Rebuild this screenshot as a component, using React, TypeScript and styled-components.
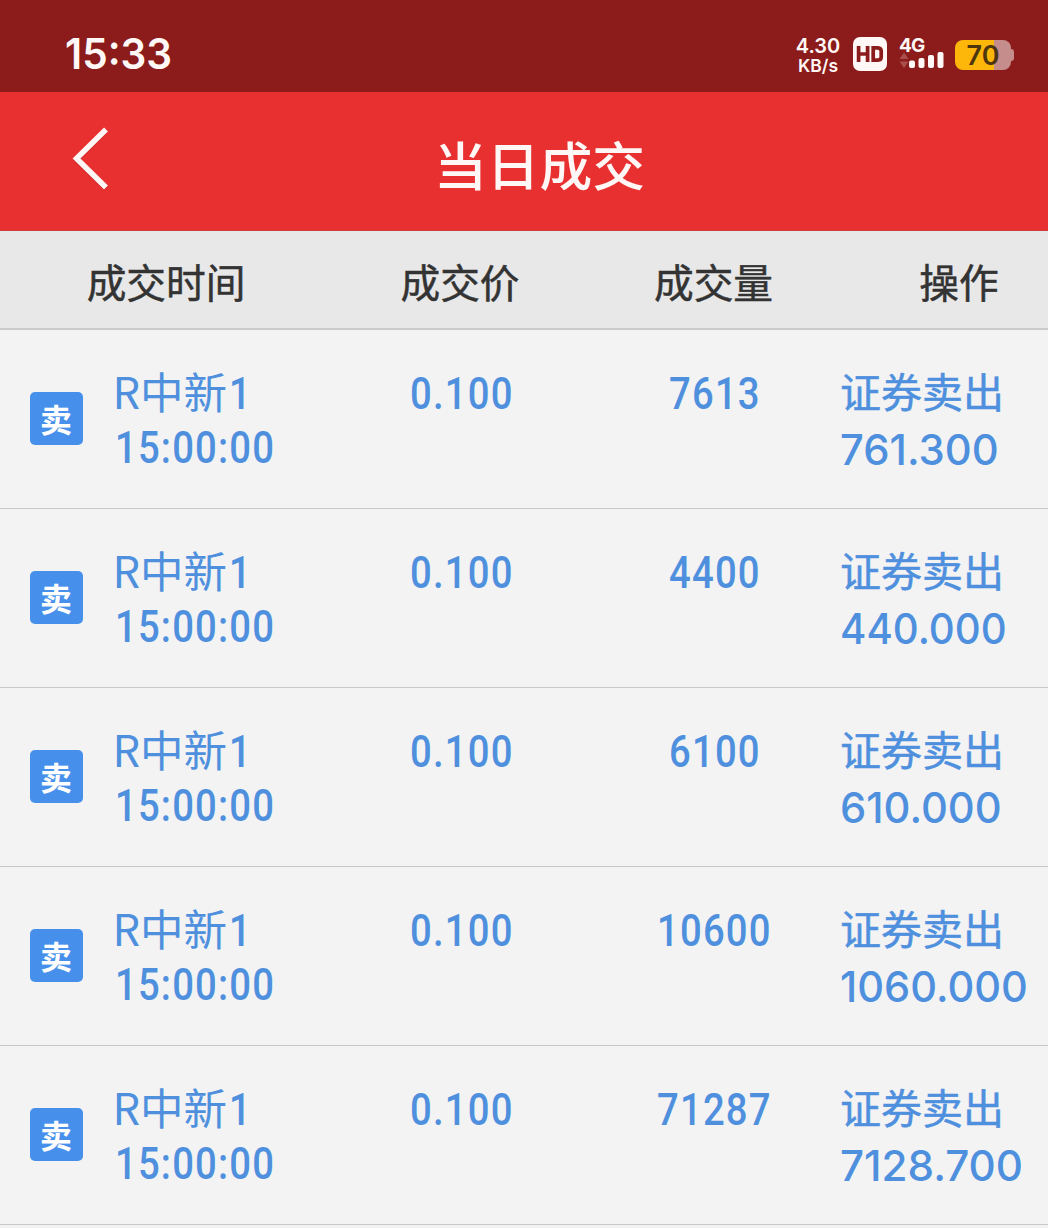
import React from "react";
import styled, { createGlobalStyle } from "styled-components";

const CJK = `"Noto Sans CJK SC", sans-serif`;

const Global = createGlobalStyle`
  html, body { margin: 0; padding: 0; background: #f3f3f3; }
  body { overflow: hidden; }
`;

const Screen = styled.div`
  width: 1048px;
  height: 1228px;
  overflow: hidden;
  display: flex;
  flex-direction: column;
  background: #f3f3f3;
  color: #4f90de;
  font-family: ${CJK};
  white-space: nowrap;
`;

const StatusBar = styled.header`
  flex: none;
  box-sizing: border-box;
  height: 92px;
  padding: 16px 34px 0 65px;
  display: flex;
  align-items: center;
  justify-content: space-between;
  background: #8b1c1b;
  color: #fff8f6;
`;

const Clock = styled.div`
  font: 600 42px/50px Inter, sans-serif;
  transform: scaleX(0.965);
  transform-origin: left;
`;

const StatusIcons = styled.div`
  display: flex;
  align-items: center;
`;

const NetSpeed = styled.div`
  width: 46px;
  margin-right: 12px;
  padding-top: 2px;
  display: flex;
  flex-direction: column;
  align-items: center;
  font: 600 20px/20px Inter, sans-serif;
`;

const Unit = styled.span`
  font-size: 17.5px;
  line-height: 19px;
`;

const HdIcon = styled.svg`
  width: 34px;
  height: 34px;
  margin-right: 12px;
`;

const Signal = styled.div`
  width: 46px;
  height: 34px;
  margin-right: 10px;
  display: flex;
  flex-direction: column;
`;

const SignalLabel = styled.span`
  height: 14px;
  font: 700 19px/17px Inter, sans-serif;
  letter-spacing: -0.8px;
`;

const Battery = styled.div`
  display: flex;
  align-items: center;
  padding-top: 2px;
`;

const BatteryBody = styled.div`
  width: 56px;
  height: 30px;
  border-radius: 8px;
  background: linear-gradient(90deg, #fdb70a 39px, #c68d8d 39px);
  color: #4d360c;
  text-align: center;
  font: 600 27px/31px Inter, sans-serif;
`;

const BatteryTip = styled.div`
  width: 3px;
  height: 12px;
  border-radius: 0 3px 3px 0;
  background: #c68d8d;
`;

const TitleBar = styled.nav`
  flex: none;
  box-sizing: border-box;
  height: 139px;
  display: grid;
  grid-template-columns: 160px 1fr 129px;
  align-items: center;
  background: #e93031;
  border-bottom: 1px solid #cf3a3a;
`;

const BackButton = styled.button`
  width: 42px;
  height: 68px;
  margin: 0 0 5px 70px;
  padding: 0;
  border: 0;
  background: none;
`;

const Title = styled.h1`
  margin: 0;
  padding-top: 3px;
  text-align: center;
  color: #fff7f5;
  font: 500 52.8px/76px ${CJK};
`;

const HeadRow = styled.div`
  flex: none;
  box-sizing: border-box;
  height: 99px;
  padding-top: 2px;
  display: grid;
  grid-template-columns: 332px 256px 251px 209px;
  align-items: center;
  background: #e8e8e8;
  border-bottom: 2px solid #cbcbcb;
`;

const HeadCell = styled.div<{ $shift?: number }>`
  padding-left: ${(p) => p.$shift ?? 0}px;
  text-align: center;
  color: #333;
  font: 400 39.7px/60px ${CJK};
  -webkit-text-stroke: 0.5px #333;
`;

const Row = styled.div`
  flex: none;
  box-sizing: border-box;
  height: 179px;
  padding-top: 33px;
  display: grid;
  grid-template-columns: 115px 219px 254px 252px 208px;
  align-items: start;
  border-bottom: 1px solid #c8c8c8;
`;

const Badge = styled.div`
  width: 53px;
  height: 53px;
  margin: 29px 0 0 29.5px;
  border-radius: 5px;
  background: #4690ec;
  color: #fff;
  text-align: center;
  font: 700 32px/52px ${CJK};
`;

const Stack = styled.div`
  display: flex;
  flex-direction: column;
  align-items: flex-start;
`;

const Name = styled.div`
  height: 54px;
  margin-left: -2.5px;
  display: flex;
  gap: 2px;
  font: 400 43.5px/56px ${CJK};
`;

const Digits = styled.div<{ $center?: boolean }>`
  height: 56px;
  padding-top: 2px;
  box-sizing: border-box;
  padding-left: ${(p) => (p.$center ? 1 : 0)}px;
  justify-self: ${(p) => (p.$center ? "center" : "start")};
  font: 500 45px/58px Roboto, sans-serif;
  letter-spacing: 1.4px;
  transform: scaleX(0.85);
  transform-origin: ${(p) => (p.$center ? "center" : "left")};
`;

const Action = styled.div`
  height: 56px;
  font: 400 41px/55px ${CJK};
  -webkit-text-stroke: 0.5px #4f90de;
`;

const Amount = styled.div<{ $stretch: number }>`
  padding-top: 1px;
  font: 500 43px/58px Inter, sans-serif;
  transform: scaleX(${(p) => p.$stretch});
  transform-origin: left;
`;

const trades = [
  { volume: "7613", amount: "761.300", stretch: 0.972 },
  { volume: "4400", amount: "440.000", stretch: 0.935 },
  { volume: "6100", amount: "610.000", stretch: 0.97 },
  { volume: "10600", amount: "1060.000", stretch: 0.966 },
  { volume: "71287", amount: "7128.700", stretch: 0.98 },
];

function HdMark() {
  return (
    <HdIcon viewBox="0 0 34 34">
      <rect width="34" height="34" rx="7" fill="#fff8f6" />
      <path
        d="M5.600 9v16M14.600 9v16M5.600 17h9M20.200 10.800v12.400h4.800q3.200-.2 3.200-3.200v-6q0-3-3.200-3.200z"
        fill="none"
        stroke="#8b1c1b"
        strokeWidth="3.7"
      />
    </HdIcon>
  );
}

function SignalBars() {
  return (
    <svg width="46" height="20" viewBox="0 0 46 20">
      <path d="M.5 8 5 1.500 9.500 8zM.500 10.500h9L5 17z" fill="#a84f4c" />
      <g fill="#fff8f6">
        <rect x="10" y="9.500" width="6" height="7.500" rx="2" />
        <rect x="19.500" y="7" width="6" height="10" rx="2" />
        <rect x="29" y="4" width="6" height="13" rx="2" />
        <rect x="38.500" y="1" width="6" height="16" rx="2" />
      </g>
    </svg>
  );
}

export default function App() {
  return (
    <Screen>
      <Global />
      <StatusBar>
        <Clock>15:33</Clock>
        <StatusIcons>
          <NetSpeed>
            <span>4.30</span>
            <Unit>KB/s</Unit>
          </NetSpeed>
          <HdMark />
          <Signal>
            <SignalLabel>4G</SignalLabel>
            <SignalBars />
          </Signal>
          <Battery>
            <BatteryBody>70</BatteryBody>
            <BatteryTip />
          </Battery>
        </StatusIcons>
      </StatusBar>
      <TitleBar>
        <BackButton aria-label="返回">
          <svg width="42" height="68" viewBox="0 0 42 68">
            <path d="M36 6 6.500 35 36 64" fill="none" stroke="#b92222" strokeOpacity=".6" strokeWidth="5" />
            <path d="M36 4.500 6.500 33.500 36 62.500" fill="none" stroke="#fff7f5" strokeWidth="5.500" />
          </svg>
        </BackButton>
        <Title>当日成交</Title>
      </TitleBar>
      <HeadRow>
        <HeadCell>成交时间</HeadCell>
        <HeadCell>成交价</HeadCell>
        <HeadCell>成交量</HeadCell>
        <HeadCell $shift={31}>操作</HeadCell>
      </HeadRow>
      {trades.map(({ volume, amount, stretch }) => (
        <Row key={volume}>
          <Badge>卖</Badge>
          <Stack>
            <Name>
              R中新<Digits>1</Digits>
            </Name>
            <Digits>15:00:00</Digits>
          </Stack>
          <Digits $center>0.100</Digits>
          <Digits $center>{volume}</Digits>
          <Stack>
            <Action>证券卖出</Action>
            <Amount $stretch={stretch}>{amount}</Amount>
          </Stack>
        </Row>
      ))}
    </Screen>
  );
}
